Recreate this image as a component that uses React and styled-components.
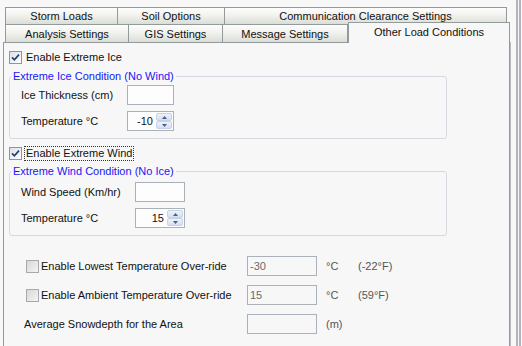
import React from "react";
import styled, { createGlobalStyle } from "styled-components";

const GlobalStyle = createGlobalStyle`
  html, body {
    margin: 0;
    padding: 0;
    background: #f7f7f7;
  }
  body {
    font-family: "Liberation Sans", Arial, sans-serif;
    font-size: 11px;
    color: #111;
  }
`;

const Screen = styled.div`
  width: 522px;
  height: 346px;
  overflow: hidden;
  display: flex;
  background: #f8f8f8;
`;

const TabControl = styled.div`
  width: 508px;
  padding: 7px 0 0 3px;
  display: flex;
  flex-direction: column;
`;

const TabRow = styled.div`
  display: flex;
  align-items: flex-start;
  height: ${(p) => p.$h}px;
  margin-left: 2px;
`;

const Tab = styled.div`
  box-sizing: border-box;
  width: ${(p) => p.$w}px;
  height: ${(p) => p.$h}px;
  border-top: 1px solid #919b9c;
  border-right: 1px solid #919b9c;
  border-left: ${(p) => (p.$first ? "1px solid #919b9c" : "none")};
  background: linear-gradient(#fdfdfd 0%, #f2f2ee 45%, #dcddd5 100%);
  display: flex;
  align-items: center;
  justify-content: center;
  line-height: 12px;
  white-space: nowrap;
`;

const ActiveTab = styled.div`
  box-sizing: border-box;
  position: relative;
  z-index: 1;
  width: 162px;
  height: 21px;
  margin-top: -2px;
  border: 1px solid #919b9c;
  border-bottom: none;
  background: #f7f7f7;
  display: flex;
  align-items: center;
  justify-content: center;
  padding-bottom: 2px;
  white-space: nowrap;
`;

const Panel = styled.div`
  flex: 1;
  border: 1px solid #919b9c;
  border-bottom: none;
  box-shadow: 1px 0 0 #b8b8c0;
  background: #f7f7f7;
  padding: 7px 0 0 5px;
  display: flex;
  flex-direction: column;
  align-items: flex-start;
`;

const Strip = styled.div`
  width: 13px;
  display: flex;
  padding-left: 6px;
  box-sizing: border-box;
`;

const StripLines = styled.div`
  width: 1px;
  border-left: 2px solid #b4b4bc;
  border-right: 2px solid #b4b4bc;
`;

const CheckRow = styled.label`
  display: flex;
  align-items: center;
  gap: ${(p) => p.$gap || 3}px;
  height: 14px;
  margin-top: ${(p) => p.$mt || 0}px;
  margin-left: ${(p) => p.$ml || 0}px;
  white-space: nowrap;
`;

const CheckText = styled.span`
  line-height: 13px;
  padding: 0 1px;
  outline: ${(p) => (p.$focus ? "1px dotted #333" : "none")};
  outline-offset: 0;
`;

const Box = styled.span`
  box-sizing: border-box;
  width: 13px;
  height: 13px;
  flex: none;
  border: 1px solid ${(p) => (p.$disabled ? "#a7a9ad" : "#8c96a8")};
  background: ${(p) =>
    p.$disabled
      ? "linear-gradient(135deg, #d8d8d6, #f4f4f2)"
      : "linear-gradient(135deg, #dfe1e6, #ffffff)"};
  display: flex;
  align-items: center;
  justify-content: center;
`;

const Group = styled.fieldset`
  box-sizing: border-box;
  width: 438px;
  margin: ${(p) => p.$mt}px 0 0 0;
  padding: 0;
  min-width: 0;
  border: 1px solid #d6dae0;
  border-radius: 3px;
`;

const Legend = styled.legend`
  margin-left: 1px;
  padding: 0 2px;
  line-height: 12px;
  color: #1717f4;
`;

const GroupBody = styled.div`
  display: grid;
  grid-template-columns: ${(p) => p.$label}px auto;
  row-gap: 6px;
  align-items: center;
  padding: ${(p) => p.$top}px 0 7px 11px;
`;

const Field = styled.div`
  box-sizing: border-box;
  width: ${(p) => p.$w}px;
  height: 20px;
  border: 1px solid #aab1b8;
  background: ${(p) => (p.$disabled ? "#f7f7f7" : "#fdfdfd")};
  color: #6a6a6a;
  padding-left: 2px;
  line-height: 18px;
`;

const SpinBox = styled.div`
  box-sizing: border-box;
  width: ${(p) => p.$w}px;
  height: 20px;
  border: 1px solid #aab1b8;
  background: #fdfdfd;
  display: flex;
  padding: 1px;
`;

const SpinValue = styled.span`
  flex: 1;
  text-align: right;
  padding-right: 3px;
  line-height: 16px;
`;

const SpinButtons = styled.div`
  width: 16px;
  display: flex;
  flex-direction: column;
`;

const SpinButton = styled.div`
  flex: 1;
  box-sizing: border-box;
  border: 1px solid #c6d2e6;
  border-radius: 2px;
  background: linear-gradient(#eef3fb, #d3dff2);
  display: flex;
  align-items: center;
  justify-content: center;
`;

const Lower = styled.div`
  display: grid;
  grid-template-columns: 223px 70px 41px auto;
  grid-auto-rows: 20px;
  row-gap: 9px;
  align-items: center;
  margin: 20px 0 0 15px;
`;

const Unit = styled.span`
  padding-left: 9px;
  color: #555;
`;

const Note = styled.span`
  color: #555;
`;

const Check = ({ checked, disabled }) => (
  <Box $disabled={disabled}>
    {checked && (
      <svg width="9" height="9" viewBox="0 0 9 9">
        <path d="M1 4.3 L3.4 6.8 L8 1.6" fill="none" stroke="#2b3f78" strokeWidth="1.7" />
      </svg>
    )}
  </Box>
);

const Spinner = ({ value, width }) => (
  <SpinBox $w={width}>
    <SpinValue>{value}</SpinValue>
    <SpinButtons>
      <SpinButton>
        <svg width="5" height="3" viewBox="0 0 5 3">
          <path d="M0 3 L2.5 0 L5 3 Z" fill="#4b5f86" />
        </svg>
      </SpinButton>
      <SpinButton>
        <svg width="5" height="3" viewBox="0 0 5 3">
          <path d="M0 0 L5 0 L2.5 3 Z" fill="#4b5f86" />
        </svg>
      </SpinButton>
    </SpinButtons>
  </SpinBox>
);

export default function App() {
  return (
    <>
      <GlobalStyle />
      <Screen>
        <TabControl>
          <TabRow $h={17}>
            <Tab $first $w={113} $h={17}>Storm Loads</Tab>
            <Tab $w={107} $h={17}>Soil Options</Tab>
            <Tab $w={282} $h={17}>Communication Clearance Settings</Tab>
          </TabRow>
          <TabRow $h={18}>
            <Tab $first $w={124} $h={18}>Analysis Settings</Tab>
            <Tab $w={94} $h={18}>GIS Settings</Tab>
            <Tab $w={125} $h={18}>Message Settings</Tab>
            <ActiveTab>Other Load Conditions</ActiveTab>
          </TabRow>
          <Panel>
            <CheckRow>
              <Check checked />
              <CheckText>Enable Extreme Ice</CheckText>
            </CheckRow>

            <Group $mt={6}>
              <Legend>Extreme Ice Condition (No Wind)</Legend>
              <GroupBody $label={106} $top={3}>
                <span>Ice Thickness (cm)</span>
                <Field $w={47} />
                <span>Temperature °C</span>
                <Spinner value="-10" width={47} />
              </GroupBody>
            </Group>

            <CheckRow $mt={7}>
              <Check checked />
              <CheckText $focus>Enable Extreme Wind</CheckText>
            </CheckRow>

            <Group $mt={5}>
              <Legend>Extreme Wind Condition (No Ice)</Legend>
              <GroupBody $label={114} $top={5}>
                <span>Wind Speed (Km/hr)</span>
                <Field $w={50} />
                <span>Temperature °C</span>
                <Spinner value="15" width={50} />
              </GroupBody>
            </Group>

            <Lower>
              <CheckRow $ml={2} $gap={2}>
                <Check disabled />
                <span>Enable Lowest Temperature Over-ride</span>
              </CheckRow>
              <Field $w={70} $disabled>-30</Field>
              <Unit>°C</Unit>
              <Note>(-22°F)</Note>

              <CheckRow $ml={2} $gap={2}>
                <Check disabled />
                <span>Enable Ambient Temperature Over-ride</span>
              </CheckRow>
              <Field $w={70} $disabled>15</Field>
              <Unit>°C</Unit>
              <Note>(59°F)</Note>

              <span>Average Snowdepth for the Area</span>
              <Field $w={70} $disabled />
              <Unit>(m)</Unit>
              <span />
            </Lower>
          </Panel>
        </TabControl>
        <Strip>
          <StripLines />
        </Strip>
      </Screen>
    </>
  );
}
